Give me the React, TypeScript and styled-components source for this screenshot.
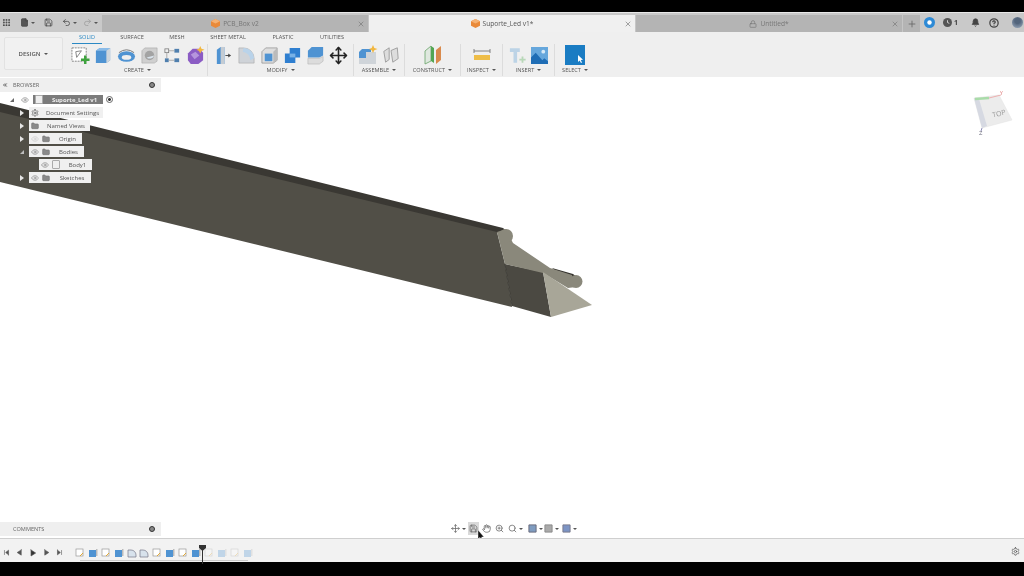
import React from "react";
import styled, { createGlobalStyle } from "styled-components";
import { LuGrip, LuFile, LuSave, LuUndo2, LuRedo2, LuPlus, LuX, LuLock, LuBell, LuCircleHelp, LuEye, LuFolder, LuSettings, LuMove, LuHand, LuZoomIn, LuSearch, LuSkipBack, LuSkipForward, LuPlay, LuChevronsLeft } from "react-icons/lu";

const GlobalStyle = createGlobalStyle`
  html, body { margin: 0; padding: 0; background: #000; }
  body { font-family: "Open Sans", "Liberation Sans", sans-serif; }
  #root { width: 1024px; height: 576px; overflow: hidden; }
`;

// PAGE
const Page = styled.div`
  width: 1024px;
  height: 576px;
  display: flex;
  flex-direction: column;
  background: #000;
  padding: 12px 0 14px;
  box-sizing: border-box;
  filter: blur(0.3px);
`;

// TAB BAR
const TabBar = styled.div`
  height: 20px;
  flex: none;
  display: flex;
  background: #c9c9c9;
  border-top: 1px solid #e8e8e8;
  box-sizing: border-box;
`;

const AppControls = styled.div`
  width: 102px;
  flex: none;
  display: flex;
  align-items: center;
  color: #444;
  svg { flex: none; }
`;

const ControlButton = styled.span<{ $left?: number }>`
  display: inline-flex;
  align-items: center;
  margin-left: ${(p) => p.$left ?? 0}px;
`;

const Caret = styled.span`
  display: inline-block;
  width: 0;
  height: 0;
  margin-left: 2px;
  border-left: 2px solid transparent;
  border-right: 2px solid transparent;
  border-top: 2px solid #555;
`;

const DocTab = styled.div<{ $active?: boolean }>`
  width: 267px;
  flex: none;
  margin-top: 2px;
  display: flex;
  align-items: center;
  justify-content: center;
  gap: 3px;
  position: relative;
  font-size: 6.6px;
  color: ${(p) => (p.$active ? "#555" : "#777")};
  background: ${(p) => (p.$active ? "#f0f0f0" : "#b4b4b4")};
  border-right: 1px solid #c6c6c6;
  box-sizing: border-box;
`;

const TabClose = styled.span`
  position: absolute;
  right: 3px;
  top: 5px;
  display: flex;
  color: #777;
`;

const NewTab = styled.div`
  width: 17px;
  flex: none;
  margin-top: 2px;
  display: flex;
  align-items: center;
  justify-content: center;
  background: #b4b4b4;
  color: #666;
`;

const AccountArea = styled.div`
  flex: 1;
  display: flex;
  align-items: center;
  color: #444;
  font-size: 7px;
  font-weight: 700;
`;

const JobCount = styled.span`
  margin-left: 2px;
`;

const Avatar = styled.span`
  width: 11px;
  height: 11px;
  margin-left: 13px;
  border-radius: 50%;
  background: radial-gradient(circle at 50% 35%, #53657c 30%, #8797ab 75%);
`;

// RIBBON
const Ribbon = styled.div`
  height: 45px;
  flex: none;
  display: flex;
  background: #efefef;
`;

const DesignButton = styled.div`
  width: 59px;
  height: 33px;
  margin: 5px 9px 0 4px;
  display: flex;
  align-items: center;
  justify-content: center;
  gap: 2px;
  flex: none;
  font-size: 6px;
  font-weight: 600;
  color: #555;
  background: #f1f1f1;
  border: 1px solid #e2e2e2;
  border-radius: 2px;
  box-sizing: border-box;
`;

const RibbonBody = styled.div`
  display: flex;
  flex-direction: column;
`;

const RibbonTabs = styled.div`
  display: flex;
  height: 12px;
  align-items: flex-start;
`;

const RibbonTab = styled.div<{ $w: number; $active?: boolean }>`
  width: ${(p) => p.$w}px;
  height: 11px;
  line-height: 10px;
  text-align: center;
  font-size: 5.6px;
  color: ${(p) => (p.$active ? "#2b89c4" : "#555")};
  border-bottom: ${(p) => (p.$active ? "1px solid #2b89c4" : "none")};
`;

const Groups = styled.div`
  display: flex;
`;

const Group = styled.div<{ $w: number; $sep?: boolean; $right?: number }>`
  width: ${(p) => p.$w}px;
  height: 32px;
  flex: none;
  display: flex;
  flex-direction: column;
  align-items: center;
  padding-right: ${(p) => p.$right ?? 0}px;
  border-right: ${(p) => (p.$sep ? "1px solid #dcdcdc" : "none")};
  box-sizing: border-box;
`;

const GroupIcons = styled.div`
  height: 22px;
  display: flex;
  align-items: center;
  gap: 4px;
`;

const GroupLabel = styled.div`
  display: flex;
  align-items: center;
  gap: 1px;
  font-size: 5.6px;
  line-height: 8px;
  color: #555;
`;

// CANVAS
const Canvas = styled.div`
  flex: 1;
  position: relative;
  background: #fff;
  overflow: hidden;
`;

const ModelLayer = styled.svg`
  position: absolute;
  left: 0;
  top: 0;
`;

const BrowserPanel = styled.div`
  position: absolute;
  left: 0;
  top: 1px;
  width: 161px;
`;

const PanelHeader = styled.div`
  height: 14px;
  display: flex;
  align-items: center;
  justify-content: space-between;
  padding: 0 6px 0 2px;
  background: #efefef;
  font-size: 5.6px;
  color: #666;
`;

const PanelTitle = styled.span<{ $left: number }>`
  flex: 1;
  margin-left: ${(p) => p.$left}px;
`;

const PanelDot = styled.span`
  width: 4px;
  height: 4px;
  border: 1px solid #333;
  background: #888;
  border-radius: 50%;
`;

const Tree = styled.div`
  margin-top: 1px;
  display: flex;
  flex-direction: column;
`;

const TreeRow = styled.div<{ $indent?: number }>`
  height: 13px;
  display: flex;
  align-items: center;
  padding-left: ${(p) => p.$indent ?? 0}px;
`;

const Expander = styled.span`
  width: 29px;
  flex: none;
  display: flex;
  justify-content: flex-end;
  padding-right: 5px;
  box-sizing: border-box;
`;

const RootExpander = styled.span`
  width: 21px;
  flex: none;
  padding-left: 10px;
  display: flex;
  box-sizing: border-box;
`;

const Arrow = styled.span`
  width: 0;
  height: 0;
  border-top: 3px solid transparent;
  border-bottom: 3px solid transparent;
  border-left: 4px solid #e6e6e6;
`;

const OpenArrow = styled.span<{ $light?: boolean }>`
  width: 0;
  height: 0;
  border-left: 4px solid transparent;
  border-bottom: 4px solid ${(p) => (p.$light ? "#bdbdbd" : "#666")};
`;

const Chip = styled.div<{ $root?: boolean; $w: number }>`
  width: ${(p) => p.$w}px;
  height: ${(p) => (p.$root ? 9 : 11)}px;
  display: flex;
  align-items: center;
  gap: 3px;
  padding-left: 2px;
  box-sizing: border-box;
  font-size: 6px;
  font-weight: ${(p) => (p.$root ? 700 : 400)};
  color: ${(p) => (p.$root ? "#eee" : "#555")};
  background: ${(p) => (p.$root ? "#7b7b7b" : "#f0f0f0")};
  white-space: nowrap;
`;

const ChipLabel = styled.span`
  flex: 1;
  text-align: center;
`;

const EyeSlot = styled.span<{ $faded?: boolean }>`
  display: inline-flex;
  color: ${(p) => (p.$faded ? "#ccc" : "#888")};
`;

const FolderSlot = styled.span`
  display: inline-flex;
  color: #777;
  svg { fill: #8a8a8a; }
`;

const DocGlyph = styled.span`
  width: 6px;
  height: 7px;
  flex: none;
  border: 1px solid #aaa;
  background: #eee;
  border-radius: 1px;
`;

const TargetDot = styled.span`
  width: 5px;
  height: 5px;
  margin-left: 3px;
  border: 1px solid #666;
  border-radius: 50%;
  background: radial-gradient(circle, #333 35%, #fff 45%);
`;

const CommentsPanel = styled(PanelHeader)`
  position: absolute;
  left: 0;
  bottom: 2px;
  width: 161px;
  box-sizing: border-box;
  padding-right: 6px;
`;

const ViewCube = styled.svg`
  position: absolute;
  left: 972px;
  top: 13px;
`;

const NavBar = styled.div`
  position: absolute;
  left: 450px;
  bottom: 3px;
  height: 13px;
  display: flex;
  align-items: center;
  gap: 1px;
  color: #666;
`;

const NavItem = styled.span<{ $active?: boolean; $gap?: number; $tight?: boolean }>`
  display: inline-flex;
  align-items: center;
  height: 13px;
  margin-right: ${(p) => p.$gap ?? 0}px;
  padding: 0 ${(p) => (p.$tight ? 0 : 1)}px;
  background: ${(p) => (p.$active ? "#d9d9d9" : "transparent")};
`;

const Pointer = styled.svg`
  position: absolute;
  left: 477px;
  top: 453px;
`;

// TIMELINE
const Timeline = styled.div`
  height: 24px;
  flex: none;
  display: flex;
  align-items: center;
  position: relative;
  padding-top: 4px;
  background: #f2f2f2;
  border-top: 1px solid #cfcfcf;
  box-sizing: border-box;
  color: #555;
`;

const Transport = styled.div`
  width: 74px;
  flex: none;
  display: flex;
  align-items: center;
  justify-content: space-between;
  padding: 0 11px 0 3px;
  box-sizing: border-box;
`;

const Steps = styled.div`
  display: flex;
  align-items: center;
  gap: 1px;
  position: relative;
  padding-bottom: 3px;
  margin-top: 3px;

  &::after {
    content: "";
    position: absolute;
    left: 6px;
    right: 5px;
    bottom: 0;
    height: 1px;
    background: #cacaca;
  }
`;

const Step = styled.span<{ $faded?: boolean }>`
  display: inline-flex;
  width: 11.9px;
  justify-content: center;
  opacity: ${(p) => (p.$faded ? 0.3 : 1)};
`;

const Marker = styled.svg`
  position: absolute;
  left: 199px;
  top: 6px;
`;

const GearSlot = styled.span`
  position: absolute;
  right: 4px;
  top: 8px;
  display: flex;
  color: #555;
`;

// ICONS
const SketchIcon = ({ size = 19 }: { size?: number }) => (
  <svg width={size} height={size} viewBox="0 0 20 20">
    <rect x="1" y="2" width="15" height="14" fill="#fff" stroke="#777" strokeWidth="0.9" strokeDasharray="2 1" />
    <path d="M5 6 L11 5 L6 12 Z" fill="none" stroke="#666" strokeWidth="0.8" />
    <path d="M15 10v9M10.5 14.5h9" stroke="#3fa33f" strokeWidth="2.6" />
  </svg>
);
const ExtrudeIcon = ({ size = 19 }: { size?: number }) => (
  <svg width={size} height={size} viewBox="0 0 20 20">
    <path d="M2 5 L6 2 H17 V15 L13 18 H2 Z" fill="#4f93d2" />
    <path d="M2 5 L6 2 H17 L13 5 Z" fill="#8bbce8" />
    <path d="M13 5 L17 2 V15 L13 18 Z" fill="#cfd6dc" />
  </svg>
);
const RevolveIcon = () => (
  <svg width="19" height="19" viewBox="0 0 20 20">
    <ellipse cx="10" cy="11" rx="9" ry="5.5" fill="#4f93d2" />
    <ellipse cx="10" cy="12" rx="5" ry="2.4" fill="#efefef" />
    <path d="M2 7 Q10 1 18 7" fill="none" stroke="#777" strokeWidth="1" />
  </svg>
);
const HoleIcon = () => (
  <svg width="19" height="19" viewBox="0 0 20 20">
    <path d="M2 5 L5 2 H18 V16 L15 18 H2 Z" fill="#cfcfcf" stroke="#999" strokeWidth="0.5" />
    <circle cx="10" cy="10" r="5" fill="#a3a3a3" />
    <path d="M7 12 A5 5 0 0 0 15 10 Z" fill="#d9e3ec" />
  </svg>
);
const PatternIcon = () => (
  <svg width="19" height="19" viewBox="0 0 20 20">
    <g fill="#4f7fae">
      <rect x="12" y="3" width="5" height="4" />
      <rect x="12" y="13" width="5" height="4" />
      <rect x="2" y="13" width="4" height="4" />
    </g>
    <rect x="2" y="3" width="4" height="4" fill="none" stroke="#777" strokeWidth="0.8" />
    <path d="M6 5h6M6 15h6M4 7v6" stroke="#999" strokeWidth="0.8" />
  </svg>
);
const MagicIcon = () => (
  <svg width="19" height="19" viewBox="0 0 20 20">
    <path d="M2 8 L7 3 H14 L18 7 V15 L13 19 H5 L2 15 Z" fill="#8b5cc4" />
    <path d="M5 9 L10 6 L14 10 L9 14 Z" fill="#b595dd" />
    <path d="M15 0 L16.3 3 L19.5 4 L16.3 5.3 L15 8 L13.7 5.3 L11 4 L13.7 3 Z" fill="#f2b73f" />
  </svg>
);
const PressPullIcon = () => (
  <svg width="19" height="19" viewBox="0 0 20 20">
    <path d="M3 4 L7 1 H11 V19 H3 Z" fill="#4f93d2" />
    <path d="M7 1 H11 V19 H7 Z" fill="#c5ccd3" />
    <path d="M12 10h4" stroke="#444" strokeWidth="1" fill="none" />
    <path d="M15 8l3 2-3 2 Z" fill="#444" />
  </svg>
);
const FilletIcon = () => (
  <svg width="19" height="19" viewBox="0 0 20 20">
    <path d="M2 18 V2 H7 A11 11 0 0 1 18 13 V18 Z" fill="#cfd3d8" stroke="#a5a5a5" strokeWidth="0.6" />
    <path d="M7 2 A11 11 0 0 1 18 13 L14 15 A9 9 0 0 0 6 6 Z" fill="#b9d3ea" />
  </svg>
);
const ChamferIcon = () => (
  <svg width="19" height="19" viewBox="0 0 20 20">
    <path d="M2 6 L6 2 H18 V15 L14 18 H2 Z" fill="#dedede" stroke="#888" strokeWidth="0.7" />
    <rect x="5" y="8" width="8" height="8" fill="#4f93d2" />
    <path d="M14 6 L18 2 V15 L14 18 Z" fill="#bbb" />
  </svg>
);
const CombineIcon = () => (
  <svg width="19" height="19" viewBox="0 0 20 20">
    <path d="M7 2 H18 V12 H13 V18 H2 V8 H7 Z" fill="#2f7fd0" />
    <path d="M7 8 H13 V12 H7 Z" fill="#78b1e6" />
  </svg>
);
const OffsetFaceIcon = () => (
  <svg width="19" height="19" viewBox="0 0 20 20">
    <path d="M2 5 L6 1 H18 V10 L14 12 H2 Z" fill="#4f93d2" />
    <path d="M2 13 H14 L18 11 V16 L14 19 H2 Z" fill="#dcdcdc" stroke="#aaa" strokeWidth="0.5" />
  </svg>
);
const AssembleIcon = () => (
  <svg width="20" height="20" viewBox="0 0 20 20">
    <path d="M1 7 L4 4 H13 V19 H1 Z" fill="#4f93d2" />
    <path d="M1 13 H18 V19 H1 Z M8 7 H18 V19 H8 Z" fill="#cfd4d9" />
    <path d="M15 0 L16.3 3 L19.5 4 L16.3 5.3 L15 8 L13.7 5.3 L11 4 L13.7 3 Z" fill="#f2b73f" />
  </svg>
);
const JointIcon = () => (
  <svg width="18" height="18" viewBox="0 0 20 20">
    <path d="M2 6 L8 2 V15 L4 18 Z" fill="#ddd" stroke="#888" strokeWidth="0.8" />
    <path d="M10 5 L17 2 L18 14 L12 18 Z" fill="#ddd" stroke="#888" strokeWidth="0.8" />
  </svg>
);
const ConstructIcon = () => (
  <svg width="22" height="20" viewBox="0 0 22 20">
    <path d="M3 6 L9 1 V16 L3 19 Z" fill="#dfe8df" stroke="#67a367" strokeWidth="0.8" />
    <path d="M9 1 L12 3 V18 L9 16 Z" fill="#53a653" />
    <path d="M14 5 L19 1 V15 L14 19 Z" fill="#d98a4c" />
  </svg>
);
const MeasureIcon = () => (
  <svg width="18" height="16" viewBox="0 0 18 16">
    <path d="M1 4h16M1 2v4M17 2v4" stroke="#777" strokeWidth="0.9" />
    <rect x="1" y="8" width="16" height="5" fill="#eebd48" />
  </svg>
);
const DecalIcon = () => (
  <svg width="18" height="19" viewBox="0 0 20 20">
    <path d="M1 2 H12 V6 H9 V18 H5 V6 H1 Z" fill="#bcd3e6" />
    <path d="M15 11v7M11.5 14.5h7" stroke="#b8d8b8" strokeWidth="2" />
  </svg>
);
const PictureIcon = () => (
  <svg width="17" height="17" viewBox="0 0 18 18">
    <rect width="18" height="18" fill="#66a7dc" />
    <path d="M0 18 V11 L5 6 L12 14 L14 12 L18 15 V18 Z" fill="#1f6db5" />
    <circle cx="13" cy="5" r="2" fill="#d6e9f7" />
  </svg>
);
const SelectIcon = () => (
  <svg width="20" height="20" viewBox="0 0 20 20">
    <rect width="20" height="20" fill="#1a7cc3" />
    <path d="M13 10 L13 17 L14.6 15.6 L16 18 L17 17.4 L15.8 15 L18 14.8 Z" fill="#fff" />
  </svg>
);
const OrangeBox = () => (
  <svg width="9" height="9" viewBox="0 0 10 10">
    <path d="M5 0 L10 2.5 V7.5 L5 10 L0 7.5 V2.5 Z" fill="#e98a3a" />
    <path d="M5 0 L10 2.5 L5 5 L0 2.5 Z" fill="#f5b274" />
  </svg>
);
const PlainIcon = ({ fill, stroke }: { fill: string; stroke: string }) => (
  <svg width="9" height="9" viewBox="0 0 10 10">
    <path d="M1 1 H9 V9 H1 Z" fill={fill} stroke={stroke} strokeWidth="1" />
  </svg>
);

const StepSketch = () => (
  <svg width="10" height="10" viewBox="0 0 10 10">
    <rect x="1" y="1" width="7" height="7" fill="#fff" stroke="#999" strokeWidth="0.7" />
    <path d="M5 8 L8 5" stroke="#e0a020" strokeWidth="0.9" />
  </svg>
);
const StepBox = () => (
  <svg width="10" height="10" viewBox="0 0 10 10">
    <path d="M1 2 H8 V9 H1 Z" fill="#4f93d2" />
    <path d="M8 1 H9.5 V8 H8 Z" fill="#bbb" />
  </svg>
);
const StepFillet = () => (
  <svg width="10" height="10" viewBox="0 0 10 10">
    <path d="M1 9 V2 H4 A5 5 0 0 1 9 7 V9 Z" fill="#d8e2ec" stroke="#778" strokeWidth="0.7" />
  </svg>
);

const stepKinds = ["s", "b", "s", "b", "f", "f", "s", "b", "s", "b", "s", "b", "s", "b"];

const browserRows = [
  { label: "Document Settings", width: 74, arrow: "closed", kind: "settings" },
  { label: "Named Views", width: 61, arrow: "closed", kind: "folder" },
  { label: "Origin", width: 53, arrow: "closed", kind: "origin" },
  { label: "Bodies", width: 55, arrow: "open", kind: "eye" },
  { label: "Body1", width: 53, arrow: "none", kind: "body" },
  { label: "Sketches", width: 62, arrow: "closed", kind: "eye" },
];

const BrowserRow = ({ row }: { row: (typeof browserRows)[number] }) => (
  <TreeRow $indent={row.kind === "body" ? 10 : 0}>
    <Expander>
      {row.arrow === "closed" && <Arrow />}
      {row.arrow === "open" && <OpenArrow $light />}
    </Expander>
    <Chip $w={row.width}>
      {row.kind === "settings" && <LuSettings size={8} />}
      {row.kind === "folder" && <FolderSlot><LuFolder size={8} /></FolderSlot>}
      {(row.kind === "eye" || row.kind === "origin") && (
        <>
          <EyeSlot $faded={row.kind === "origin"}><LuEye size={8} /></EyeSlot>
          <FolderSlot><LuFolder size={8} /></FolderSlot>
        </>
      )}
      {row.kind === "body" && (
        <>
          <EyeSlot><LuEye size={8} /></EyeSlot>
          <DocGlyph />
        </>
      )}
      <ChipLabel>{row.label}</ChipLabel>
    </Chip>
  </TreeRow>
);

export default function App() {
  return (
    <>
      <GlobalStyle />
      <Page>
        <TabBar>
          <AppControls>
            <ControlButton $left={2}><LuGrip size={9} strokeWidth={3} /></ControlButton>
            <ControlButton $left={9}><LuFile size={9} fill="#555" /><Caret /></ControlButton>
            <ControlButton $left={9}><LuSave size={9} /></ControlButton>
            <ControlButton $left={9}><LuUndo2 size={9} /><Caret /></ControlButton>
            <ControlButton $left={6}><LuRedo2 size={9} color="#999" /><Caret /></ControlButton>
          </AppControls>
          <DocTab><OrangeBox />PCB_Box v2<TabClose><LuX size={8} /></TabClose></DocTab>
          <DocTab $active><OrangeBox />Suporte_Led v1*<TabClose><LuX size={8} /></TabClose></DocTab>
          <DocTab><LuLock size={8} />Untitled*<TabClose><LuX size={8} /></TabClose></DocTab>
          <NewTab><LuPlus size={10} /></NewTab>
          <AccountArea>
            <ControlButton $left={4}>
              <svg width="11" height="11" viewBox="0 0 10 10"><circle cx="5" cy="5" r="5" fill="#2d8ad6" /><circle cx="5" cy="5" r="2" fill="#fff" /></svg>
            </ControlButton>
            <ControlButton $left={8}>
              <svg width="9" height="9" viewBox="0 0 10 10"><circle cx="5" cy="5" r="5" fill="#555" /><path d="M5 2.5V5L7 6" stroke="#ddd" fill="none" /></svg>
              <JobCount>1</JobCount>
            </ControlButton>
            <ControlButton $left={13}><LuBell size={9} fill="#444" /></ControlButton>
            <ControlButton $left={9}><LuCircleHelp size={10} strokeWidth={3} /></ControlButton>
            <Avatar />
          </AccountArea>
        </TabBar>

        <Ribbon>
          <DesignButton>DESIGN<Caret /></DesignButton>
          <RibbonBody>
            <RibbonTabs>
              <RibbonTab $w={30} $active>SOLID</RibbonTab>
              <RibbonTab $w={60}>SURFACE</RibbonTab>
              <RibbonTab $w={30}>MESH</RibbonTab>
              <RibbonTab $w={72}>SHEET METAL</RibbonTab>
              <RibbonTab $w={38}>PLASTIC</RibbonTab>
              <RibbonTab $w={60}>UTILITIES</RibbonTab>
            </RibbonTabs>
            <Groups>
              <Group $w={136} $sep $right={4}>
                <GroupIcons>
                  <SketchIcon /><ExtrudeIcon /><RevolveIcon /><HoleIcon /><PatternIcon /><MagicIcon />
                </GroupIcons>
                <GroupLabel>CREATE<Caret /></GroupLabel>
              </Group>
              <Group $w={146} $sep>
                <GroupIcons>
                  <PressPullIcon /><FilletIcon /><ChamferIcon /><CombineIcon /><OffsetFaceIcon />
                  <LuMove size={19} color="#222" strokeWidth={2} />
                </GroupIcons>
                <GroupLabel>MODIFY<Caret /></GroupLabel>
              </Group>
              <Group $w={51} $sep>
                <GroupIcons><AssembleIcon /><JointIcon /></GroupIcons>
                <GroupLabel>ASSEMBLE<Caret /></GroupLabel>
              </Group>
              <Group $w={56} $sep>
                <GroupIcons><ConstructIcon /></GroupIcons>
                <GroupLabel>CONSTRUCT<Caret /></GroupLabel>
              </Group>
              <Group $w={42} $sep>
                <GroupIcons><MeasureIcon /></GroupIcons>
                <GroupLabel>INSPECT<Caret /></GroupLabel>
              </Group>
              <Group $w={52} $sep>
                <GroupIcons><DecalIcon /><PictureIcon /></GroupIcons>
                <GroupLabel>INSERT<Caret /></GroupLabel>
              </Group>
              <Group $w={40}>
                <GroupIcons><SelectIcon /></GroupIcons>
                <GroupLabel>SELECT<Caret /></GroupLabel>
              </Group>
            </Groups>
          </RibbonBody>
        </Ribbon>

        <Canvas>
          <ModelLayer width="1024" height="461" viewBox="0 77 1024 461">
            <path d="M0 103 L503 228 L510 234 L497 233 L0 113 Z" fill="#3a3833" />
            <path d="M0 112 L497 232 L505 264 L512 307 L0 182 Z" fill="#514f47" />
            <path d="M505 264 L543 272 L551 317 L512 306 Z" fill="#4b4942" />
            <path d="M505 264 L512 306" stroke="#34322c" strokeWidth="0.8" fill="none" />
            <path d="M552 268 L573 274 L578 278 L565 280 Z" fill="#33312c" />
            <path d="M497 232 L506 229 L513 243 L550 268 L572 275 L576 287 L568 288 L543 273 L505 264 Z" fill="#8a887b" />
            <circle cx="506" cy="236" r="7" fill="#8a887b" />
            <circle cx="576" cy="281.5" r="6.5" fill="#8a887b" />
            <path d="M543 272 L592 305 L551 317 Z" fill="#a8a698" />
          </ModelLayer>

          <BrowserPanel>
            <PanelHeader>
              <LuChevronsLeft size={6} strokeWidth={3} color="#333" />
              <PanelTitle $left={5}>BROWSER</PanelTitle>
              <PanelDot />
            </PanelHeader>
            <Tree>
              <TreeRow>
                <RootExpander><OpenArrow /></RootExpander>
                <EyeSlot><LuEye size={8} /></EyeSlot>
                <ControlButton $left={4}>
                  <Chip $root $w={70}><DocGlyph /><ChipLabel>Suporte_Led v1</ChipLabel></Chip>
                </ControlButton>
                <TargetDot />
              </TreeRow>
              {browserRows.map((row) => <BrowserRow key={row.label} row={row} />)}
            </Tree>
          </BrowserPanel>

          <ViewCube width="44" height="46" viewBox="0 0 44 46">
            <path d="M2 8 L27 5 L40 30 L10 38 Z" fill="#ececec" stroke="#e2e2e2" strokeWidth="0.5" />
            <path d="M2 8 L7 9 L15 36 L10 38 Z" fill="#d6d9e2" />
            <path d="M3 9 L17 8" stroke="#a9dca9" strokeWidth="2.5" />
            <path d="M17 8 L29 5" stroke="#ecb0b0" strokeWidth="1" />
            <path d="M10 38 L9 41" stroke="#8d8db8" strokeWidth="1" />
            <text x="20" y="26" fontSize="7" fill="#999" fontFamily="Open Sans" transform="rotate(-14 27 23)">TOP</text>
            <text x="28" y="5" fontSize="5" fill="#d77">Y</text>
            <text x="7" y="45" fontSize="6" fill="#667">Z</text>
          </ViewCube>

          <CommentsPanel>
            <PanelTitle $left={11}>COMMENTS</PanelTitle>
            <PanelDot />
          </CommentsPanel>

          <NavBar>
            <NavItem><LuMove size={9} /><Caret /></NavItem>
            <NavItem $active $gap={1}><LuSave size={9} /></NavItem>
            <NavItem $gap={1}><LuHand size={9} /></NavItem>
            <NavItem $gap={1}><LuZoomIn size={9} /></NavItem>
            <NavItem $gap={3}><LuSearch size={9} /><Caret /></NavItem>
            <NavItem $tight><PlainIcon fill="#7f9cc0" stroke="#667" /><Caret /></NavItem>
            <NavItem $tight $gap={2}><PlainIcon fill="#aaa" stroke="#888" /><Caret /></NavItem>
            <NavItem $tight><PlainIcon fill="#7c94c4" stroke="#778" /><Caret /></NavItem>
          </NavBar>

          <Pointer width="8" height="11" viewBox="0 0 8 11">
            <path d="M1 0 V9 L3 7.4 L4.6 10.5 L6 9.8 L4.5 7 H7 Z" fill="#111" stroke="#fff" strokeWidth="0.4" />
          </Pointer>
        </Canvas>

        <Timeline>
          <Transport>
            <LuSkipBack size={7} fill="#555" />
            <LuPlay size={7} fill="#555" style={{ transform: "scaleX(-1)" }} />
            <LuPlay size={8} fill="#333" />
            <LuPlay size={7} fill="#555" />
            <LuSkipForward size={7} fill="#555" />
          </Transport>
          <Steps>
            {stepKinds.map((kind, i) => (
              <Step key={i} $faded={i > 9}>
                {kind === "s" && <StepSketch />}
                {kind === "b" && <StepBox />}
                {kind === "f" && <StepFillet />}
              </Step>
            ))}
          </Steps>
          <Marker width="8" height="19" viewBox="0 0 8 19">
            <path d="M0 0 H7 V3 L3.5 6 L0 3 Z" fill="#333" />
            <path d="M3.5 5 V19" stroke="#333" strokeWidth="1" />
          </Marker>
          <GearSlot><LuSettings size={9} /></GearSlot>
        </Timeline>
      </Page>
    </>
  );
}
